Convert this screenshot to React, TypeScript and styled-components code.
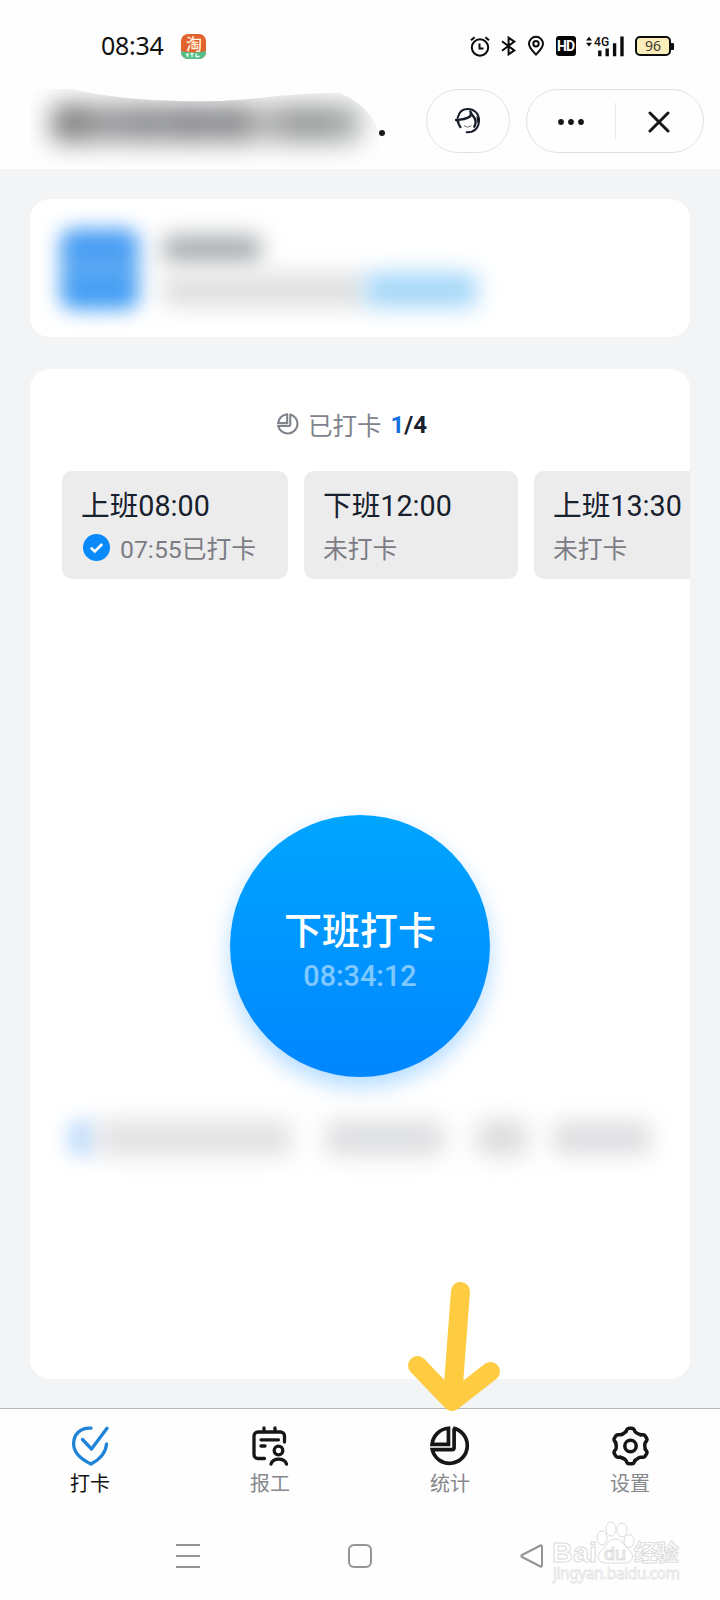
import React from 'react';
import styled, { createGlobalStyle } from 'styled-components';

const GlobalStyle = createGlobalStyle`
  * { box-sizing: border-box; }
  body { margin: 0; background: #fff; }
`;

const Screen = styled.div`
  position: relative;
  width: 720px;
  height: 1600px;
  display: flex;
  flex-direction: column;
  overflow: hidden;
  background: #fefefe;
  color: #17202c;
  font-family: Roboto, 'Noto Sans CJK SC', sans-serif;
`;

const StatusBar = styled.div`
  height: 80px;
  padding: 12px 46px 0 101px;
  display: flex;
  align-items: center;
  svg { overflow: visible; }
`;

const Clock = styled.span`
  font: 400 25px/30px 'Noto Sans', sans-serif;
  letter-spacing: -0.3px;
  color: #111;
  width: 80px;
  padding-bottom: 2px;
`;

const StatusIcons = styled.div`
  margin-left: auto;
  display: flex;
  align-items: center;
  svg { display: block; }
`;

const Gap = styled.i<{ $w: number }>`
  width: ${(p) => p.$w}px;
`;

const HdBadge = styled.span`
  width: 20px;
  height: 20px;
  border-radius: 3px;
  background: #050505;
  color: #fff;
  font: 700 14px/20px Roboto, sans-serif;
  letter-spacing: -1px;
  text-indent: -1px;
  text-align: center;
`;

const Battery = styled.span`
  width: 36px;
  height: 20px;
  border: 2px solid #0b0b0b;
  border-radius: 5px;
  background: #fbeebb;
  color: #3c3a2c;
  font: 400 14px/16px 'Noto Sans', sans-serif;
  text-align: center;
`;

const BatteryTip = styled.i`
  width: 3px;
  height: 7px;
  background: #0b0b0b;
  border-radius: 0 1px 1px 0;
`;

const Header = styled.header`
  height: 89px;
  padding: 9px 16px 0 30px;
  display: flex;
  align-items: flex-start;
`;

const TitleMask = styled.div`
  width: 349px;
  height: 78px;
  display: flex;
  align-items: center;
  padding: 0 0 10px 22px;
  clip-path: path('M0 0 H40 Q90 11 150 12 Q190 13 230 9 Q270 4 310 4 Q342 18 349 44 V78 H0 Z');
`;

const TitleSmudge = styled.div`
  width: 310px;
  height: 38px;
  border-radius: 8px;
  filter: blur(13px);
  background: linear-gradient(90deg, #7b7c7d 0 24px, #97989a 40px 75px, #88898b 95px, #97989a 110px, #85868a 135px 145px, #97989a 160px, #808183 185px, #c0c1c2 210px, #9a9c9d 235px 275px, #b6bab9 310px);
`;

const TitleDot = styled.i`
  width: 6px;
  height: 6px;
  margin: 41px 0 0 0;
  border-radius: 50%;
  background: #1a1a1a;
`;

const Capsule = styled.div<{ $w: number }>`
  width: ${(p) => p.$w}px;
  height: 64px;
  border: 1px solid #e1e2e4;
  border-radius: 32px;
  display: flex;
  align-items: center;
  justify-content: center;
`;

const HeaderActions = styled.div`
  margin-left: auto;
  display: flex;
  gap: 16px;
`;

const CapsuleHalf = styled.span`
  flex: 1;
  height: 36px;
  padding-top: 1px;
  display: flex;
  align-items: center;
  justify-content: center;
  & + & { border-left: 1px solid #e6e7e9; }
`;

const Content = styled.main`
  height: 1239px;
  background: #f3f4f6;
  padding: 30px 30px 29px;
  display: flex;
  flex-direction: column;
  gap: 32px;
`;

const ProfileCard = styled.section`
  height: 138px;
  border-radius: 20px;
  background: #fff;
  padding: 30px 30px;
  display: flex;
  gap: 24px;
`;

const Avatar = styled.div`
  width: 79px;
  height: 80px;
  border-radius: 14px;
  background: linear-gradient(#3a95f5, #5ca9f2 50%, #3295f5);
  filter: blur(10px);
`;

const ProfileLines = styled.div`
  display: flex;
  flex-direction: column;
  gap: 10px;
  padding-top: 6px;
`;

const LineRow = styled.div`
  display: flex;
`;

const Smudge = styled.i<{ $w: number; $h: number; $c: string; $b?: number }>`
  display: block;
  width: ${(p) => p.$w}px;
  height: ${(p) => p.$h}px;
  border-radius: 6px;
  background: ${(p) => p.$c};
  filter: blur(${(p) => p.$b ?? 11}px);
`;

const PunchCard = styled.section`
  height: 1010px;
  border-radius: 20px;
  background: #fff;
  overflow: hidden;
  display: flex;
  flex-direction: column;
  align-items: center;
`;

const Progress = styled.div`
  height: 102px;
  padding: 8px 16px 0 0;
  display: flex;
  align-items: center;
  font-size: 24.5px;
  color: #80848c;
  svg { margin-right: 9px; }
`;

const Count = styled.b`
  margin-left: 9px;
  padding-top: 1px;
  font-size: 24px;
  color: #17202c;
  em { font-style: normal; color: #1772df; }
`;

const ShiftList = styled.div`
  width: 100%;
  padding-left: 32px;
  display: flex;
  gap: 16px;
`;

const Shift = styled.div<{ $w: number }>`
  flex: none;
  width: ${(p) => p.$w}px;
  height: 108px;
  border-radius: 10px;
  background: #ececec;
  padding: 15px 0 0 19px;
`;

const ShiftTitle = styled.div`
  font-size: 28.7px;
  line-height: 40px;
`;

const ShiftState = styled.div`
  display: flex;
  align-items: center;
  height: 44px;
  padding-top: 3px;
  font-size: 24.8px;
  line-height: 44px;
  color: #7c7d84;
  svg { margin: 0 10px 4px 2px; }
`;

const PunchButton = styled.button`
  flex: none;
  width: 260px;
  height: 262px;
  margin-top: 236px;
  padding: 6px 0 0;
  border: 0;
  border-radius: 50%;
  background: linear-gradient(#00a5ff, #0086ff);
  box-shadow: 0 10px 22px rgba(0, 140, 255, 0.3);
  color: #fff;
  font-family: inherit;
  display: flex;
  flex-direction: column;
  align-items: center;
  justify-content: center;
`;

const PunchLabel = styled.span`
  font-size: 38px;
  line-height: 53px;
  font-weight: 500;
`;

const PunchTime = styled.span`
  font-size: 28.8px;
  line-height: 36px;
  font-weight: 500;
  color: rgba(255, 255, 255, 0.5);
`;

const LocationRow = styled.div`
  width: 100%;
  margin-top: 43px;
  padding-left: 37px;
  display: flex;
  align-items: center;
`;

const TabBar = styled.nav`
  height: 102px;
  border-top: 1px solid #b5b7ba;
  display: grid;
  grid-template-columns: repeat(4, 1fr);
`;

const Tab = styled.div<{ $active?: boolean }>`
  display: flex;
  flex-direction: column;
  align-items: center;
  padding-top: 17px;
  font-size: 20px;
  line-height: 30px;
  color: ${(p) => (p.$active ? '#111' : '#87888b')};
  svg { display: block; margin-bottom: 3px; }
`;

const SystemNav = styled.div`
  height: 90px;
  padding: 2px 177px 0 176px;
  display: flex;
  align-items: center;
  justify-content: space-between;
`;

const Pointer = styled.svg`
  position: absolute;
  left: 400px;
  top: 1276px;
`;

const Watermark = styled.svg`
  position: absolute;
  left: 546px;
  top: 1516px;
`;

const TaobaoIcon = () => (
  <svg width="25" height="25" viewBox="0 0 25 25">
    <defs><clipPath id="app"><rect width="25" height="25" rx="7" /></clipPath></defs>
    <g clipPath="url(#app)">
      <rect width="25" height="25" fill="#e2622f" />
      <path d="M0 17q12 3 25 0v8H0z" fill="#55c08a" />
    </g>
    <text x="13" y="15.5" fontSize="16" fontWeight="500" textAnchor="middle" fill="#fff3df" fontFamily="Noto Sans CJK SC, sans-serif">淘</text>
    <path d="M5 20.500h3m-1.500-1v3.500m3-3.500h3m-1.500 0v3.500m4-3.500v3h3.500" stroke="#e6fff2" strokeWidth="1.300" fill="none" />
  </svg>
);

const AlarmIcon = () => (
  <svg width="20" height="21" viewBox="0 0 20 21" fill="none" stroke="#0b0b0b" strokeWidth="2">
    <circle cx="10" cy="11.5" r="8.2" /><path d="M9.500 7.500v5h4M1 4.200 4.600 1.200M19 4.200 15.400 1.200" />
  </svg>
);

const BluetoothIcon = () => (
  <svg width="15" height="20" viewBox="0 0 15 20" fill="none" stroke="#0b0b0b" strokeWidth="2">
    <path d="M1 5.200 13.300 14.400 7.600 18.300V1.700l5.700 3.900L1 14.800" />
  </svg>
);

const PinIcon = () => (
  <svg width="16" height="20" viewBox="0 0 16 20" fill="none" stroke="#0b0b0b" strokeWidth="2">
    <path d="M8 18.600C4 14.600 1 11.500 1 7.800a7 7 0 0 1 14 0c0 3.700-3 6.800-7 10.800Z" /><circle cx="8" cy="7.800" r="2.700" />
  </svg>
);

const SignalIcon = () => (
  <svg width="38" height="21" viewBox="0 0 113 62" fill="#0b0b0b">
    <path d="M0 13 9 2l9 11zM0 20h18L9 31z" />
    <text x="24" y="30" fontSize="40" textLength="45" lengthAdjust="spacingAndGlyphs" fontWeight="500" fontFamily="Roboto, sans-serif">4G</text>
    <path d="M36 43h10v17H36zM58 37h10v23H58zM80 21h10v39H80zM102 1h10v59h-10z" />
  </svg>
);

const ServiceIcon = () => (
  <svg width="26" height="26" viewBox="0 0 78 78" fill="none" stroke="#141c28" strokeWidth="6" strokeLinecap="round">
    <path d="M8 29C12 12 23 3 38 3c20 0 34 14 34 34 0 23-14 37-37 36" />
    <path d="M3 36c16 0 31-3 43-11l2-10M9 38c0 9 3 14 7 19" strokeWidth="7" />
    <path d="M0 35l9-5v15z" fill="#141c28" stroke="none" />
    <path d="M46 11c5 14 16 16 16 31 0 6-1 9-4 14" strokeWidth="7" />
    <path d="M64 24l11 7v8l-8 6z" fill="#141c28" stroke="none" />
    <path d="M28 54q10 8 20 0" strokeWidth="3" stroke="#716c60" />
  </svg>
);

const PieIcon = ({ size, color, stroke }: { size: number; color: string; stroke: number }) => (
  <svg width={size} height={size} viewBox="0 0 39 39" fill="none" stroke={color} strokeWidth={stroke}>
    <path d="M18 2.200V18H2C2.800 9.500 9.500 2.800 18 2.200Z" />
    <path d="M22.500 2.100A17.300 17.300 0 1 1 2.200 23H21.500a2 2 0 0 0 2-2V2.200" />
  </svg>
);

const DoneIcon = () => (
  <svg width="27" height="27" viewBox="0 0 27 27">
    <circle cx="13.500" cy="13.500" r="13.500" fill="#0a89fb" />
    <path d="m7.800 13.800 4 3.600 7.400-7.400" fill="none" stroke="#fff" strokeWidth="2.600" />
  </svg>
);

const PunchIcon = () => (
  <svg width="38" height="40" viewBox="0 0 38 40" fill="none" stroke="#1f84d8" strokeWidth="3.300" strokeLinecap="round" strokeLinejoin="round">
    <path d="M20 2.200C8.500 1.500 2.500 9 2.600 18c.2 9.500 9 16 17.400 20C27.500 34 35 27 35.500 18" />
    <path d="m11.500 13.500 9 9.500L36 2.200" />
  </svg>
);

const ReportIcon = () => (
  <svg width="36" height="40" viewBox="0 0 36 40" fill="none" stroke="#161616" strokeWidth="3.300" strokeLinecap="round" strokeLinejoin="round">
    <path d="M12.500 32.500H6a4 4 0 0 1-4-4V10a4 4 0 0 1 4-4h22.500a4 4 0 0 1 4 4v6M12 2v4M23 2v4M9 13.800h17.500M9 20H13" />
    <circle cx="26.500" cy="24.500" r="4.300" />
    <path d="M19 38c2.200-6.500 13.300-6.500 15.500 0" />
  </svg>
);

const gearLobe = 'M-4.500-14.500C-3-17.500-3.500-17.800-1.500-17.800H1.500C3.500-17.800 3-17.500 4.500-14.500C5.500-12.700 7.500-12 10.300-11.200';

const GearIcon = () => (
  <svg width="37" height="40" viewBox="-18.5 -20 37 40" fill="none" stroke="#161616" strokeWidth="3.500" strokeLinecap="round" strokeLinejoin="round">
    {[0, 60, 120, 180, 240, 300].map((deg) => (
      <path key={deg} d={gearLobe} transform={`rotate(${deg})`} />
    ))}
    <circle r="5.700" />
  </svg>
);

const shifts = [
  { title: '上班08:00', state: '07:55已打卡', width: 226, done: true },
  { title: '下班12:00', state: '未打卡', width: 214, done: false },
  { title: '上班13:30', state: '未打卡', width: 214, done: false },
];

export default function App() {
  return (
    <Screen>
      <GlobalStyle />
      <StatusBar>
        <Clock>08:34</Clock>
        <TaobaoIcon />
        <StatusIcons>
          <AlarmIcon /><Gap $w={11} /><BluetoothIcon /><Gap $w={12} /><PinIcon /><Gap $w={12} />
          <HdBadge>HD</HdBadge><Gap $w={10} /><SignalIcon /><Gap $w={11} />
          <Battery>96</Battery><BatteryTip />
        </StatusIcons>
      </StatusBar>
      <Header>
        <TitleMask><TitleSmudge /></TitleMask>
        <TitleDot />
        <HeaderActions>
          <Capsule $w={84}><ServiceIcon /></Capsule>
          <Capsule $w={178}>
            <CapsuleHalf>
              <svg width="28" height="8" fill="#161616"><circle cx="4" cy="4" r="2.900" /><circle cx="14" cy="4" r="2.900" /><circle cx="24" cy="4" r="2.900" /></svg>
            </CapsuleHalf>
            <CapsuleHalf>
              <svg width="22" height="22" stroke="#161616" strokeWidth="3" strokeLinecap="round"><path d="m2 2 18 18M20 2 2 20" /></svg>
            </CapsuleHalf>
          </Capsule>
        </HeaderActions>
      </Header>
      <Content>
        <ProfileCard>
          <Avatar />
          <ProfileLines>
            <Smudge $w={98} $h={36} $c="#a9adb0" />
            <LineRow>
              <Smudge $w={202} $h={34} $c="#dfe0e0" />
              <Smudge $w={112} $h={34} $c="#a3d6f8" />
            </LineRow>
          </ProfileLines>
        </ProfileCard>
        <PunchCard>
          <Progress>
            <PieIcon size={22} color="#80848c" stroke={3.8} />
            已打卡
            <Count><em>1</em>/4</Count>
          </Progress>
          <ShiftList>
            {shifts.map((s) => (
              <Shift key={s.title} $w={s.width}>
                <ShiftTitle>{s.title}</ShiftTitle>
                <ShiftState>{s.done && <DoneIcon />}{s.state}</ShiftState>
              </Shift>
            ))}
          </ShiftList>
          <PunchButton>
            <PunchLabel>下班打卡</PunchLabel>
            <PunchTime>08:34:12</PunchTime>
          </PunchButton>
          <LocationRow>
            <Smudge $w={30} $h={36} $c="#c8e1fd" $b={9} />
            <Smudge $w={194} $h={34} $c="#dfe0e1" $b={12} />
            <Gap $w={35} />
            <Smudge $w={118} $h={34} $c="#dcdddf" $b={12} />
            <Gap $w={33} />
            <Smudge $w={50} $h={34} $c="#d9dadc" $b={12} />
            <Gap $w={26} />
            <Smudge $w={98} $h={34} $c="#dedfe1" $b={11} />
          </LocationRow>
        </PunchCard>
      </Content>
      <TabBar>
        <Tab $active><PunchIcon />打卡</Tab>
        <Tab><ReportIcon />报工</Tab>
        <Tab><PieIcon size={40} color="#161616" stroke={3.6} />统计</Tab>
        <Tab><GearIcon />设置</Tab>
      </TabBar>
      <SystemNav>
        <svg width="24" height="24" stroke="#949494" strokeWidth="2"><path d="M0 1h24M0 12h24M0 23h24" /></svg>
        <svg width="24" height="24" fill="none" stroke="#949494" strokeWidth="2"><rect x="1" y="1" width="22" height="22" rx="5" /></svg>
        <svg width="23" height="24" fill="none" stroke="#949494" strokeWidth="2" strokeLinejoin="round"><path d="M2 11 20.500 1.500q1.500-.5 1.500 1v19q0 1.500-1.500 1L2 13q-1.500-1 0-2Z" /></svg>
      </SystemNav>
      <Pointer width="110" height="142" fill="none" stroke="#fecb41" strokeWidth="19" strokeLinecap="round" strokeLinejoin="round">
        <path d="M60.500 15.500 53 115M17.500 89.500l34.500 36 38.500-30" />
      </Pointer>
      <Watermark width="150" height="76" fill="#fff" stroke="#dcdcdc" strokeWidth="1">
        <text x="6" y="46" fontSize="28" fontWeight="700" textLength="45" lengthAdjust="spacingAndGlyphs" fontFamily="Liberation Sans, sans-serif">Bai</text>
        <ellipse cx="56" cy="22" rx="5" ry="7" /><ellipse cx="65" cy="13" rx="5" ry="7" /><ellipse cx="76" cy="14" rx="5" ry="7" /><ellipse cx="83" cy="25" rx="5" ry="6.500" />
        <path d="M69 23c7 0 9 7 14 11 6 5 4 13-4 13H60c-9 0-10-8-4-13 5-4 6-11 13-11Z" />
        <text x="58" y="44" fontSize="19" textLength="22" lengthAdjust="spacingAndGlyphs" fontFamily="Liberation Sans, sans-serif">du</text>
        <text x="88" y="45" fontSize="23" fontWeight="700" textLength="45" fontFamily="Noto Sans CJK SC, sans-serif">经验</text>
        <text x="7" y="63" fontSize="15.500" textLength="127" stroke="#e4e4e4" strokeWidth=".8" fontFamily="Noto Sans, sans-serif">jingyan.baidu.com</text>
      </Watermark>
    </Screen>
  );
}
